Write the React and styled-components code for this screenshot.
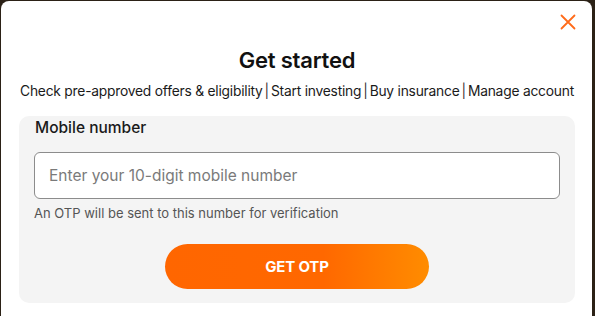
import React from 'react';
import styled, { createGlobalStyle } from 'styled-components';

const GlobalStyle = createGlobalStyle`
  html, body {
    margin: 0;
    padding: 0;
    background: #2b2116;
    overflow: hidden;
  }
  * {
    box-sizing: border-box;
  }
`;

const Overlay = styled.div`
  width: 595px;
  height: 316px;
  padding: 1px 3px 0 1px;
  font-family: 'Inter', 'Open Sans', sans-serif;
`;

const Modal = styled.div`
  position: relative;
  height: 330px;
  background: #ffffff;
  border-radius: 8px;
  padding: 44px 17px 0 18px;
  display: flex;
  flex-direction: column;
  align-items: center;
`;

const CloseButton = styled.button`
  position: absolute;
  top: 12px;
  right: 15px;
  width: 18px;
  height: 18px;
  padding: 0;
  border: none;
  background: none;
  cursor: pointer;
  display: flex;
  align-items: center;
  justify-content: center;
`;

const Title = styled.h2`
  margin: 0;
  font-size: 22px;
  line-height: 30px;
  font-weight: 600;
  color: #111111;
  letter-spacing: -0.2px;
`;

const Subtitle = styled.p`
  margin: 6px 0 0;
  font-size: 13.8px;
  line-height: 20px;
  color: #1a1a1a;
  white-space: nowrap;
  letter-spacing: -0.22px;
`;

const Divider = styled.span`
  margin: 0 2px;
  color: #333;
`;

const Panel = styled.div`
  align-self: stretch;
  margin-top: 15px;
  background: #f4f4f4;
  border-radius: 10px;
  padding: 2px 15px 14px 15px;
  display: flex;
  flex-direction: column;
`;

const Label = styled.label`
  font-size: 15.5px;
  font-weight: 500;
  line-height: 20px;
  color: #1a1a1a;
  padding-left: 1px;
`;

const PhoneInput = styled.input`
  margin-top: 14px;
  height: 47px;
  width: 100%;
  border: 1px solid #8c8c8c;
  border-radius: 6px;
  background: #ffffff;
  padding: 0 14px;
  font-family: inherit;
  font-size: 15.5px;
  color: #333;
  outline: 0;

  &::placeholder {
    color: #7a7a7a;
  }
`;

const Hint = styled.p`
  margin: 6px 0 0;
  font-size: 13px;
  line-height: 17px;
  color: #555555;
`;

const SubmitButton = styled.button`
  align-self: center;
  margin-top: 22px;
  width: 264px;
  height: 45px;
  border: none;
  border-radius: 23px;
  background: linear-gradient(90deg, #ff6600 0%, #ff6800 60%, #ff8c00 100%);
  color: #ffffff;
  font-family: inherit;
  font-size: 15px;
  font-weight: 700;
  letter-spacing: -0.2px;
  cursor: pointer;
`;

const CloseIcon = () => (
  <svg width="16" height="16" viewBox="0 0 16 16">
    <path d="M1.5 1.5 L14.5 14.5 M14.5 1.5 L1.5 14.5" stroke="#ff6b1a" strokeWidth="1.8" strokeLinecap="round" />
  </svg>
);

const App = () => {
  return (
    <>
      <GlobalStyle />
      <Overlay>
        <Modal>
          <CloseButton aria-label="Close">
            <CloseIcon />
          </CloseButton>
          <Title>Get started</Title>
          <Subtitle>
            Check pre-approved offers &amp; eligibility<Divider>|</Divider>Start investing
            <Divider>|</Divider>Buy insurance<Divider>|</Divider>Manage account
          </Subtitle>
          <Panel>
            <Label>Mobile number</Label>
            <PhoneInput type="tel" placeholder="Enter your 10-digit mobile number" />
            <Hint>An OTP will be sent to this number for verification</Hint>
            <SubmitButton>GET OTP</SubmitButton>
          </Panel>
        </Modal>
      </Overlay>
    </>
  );
};

export default App;
